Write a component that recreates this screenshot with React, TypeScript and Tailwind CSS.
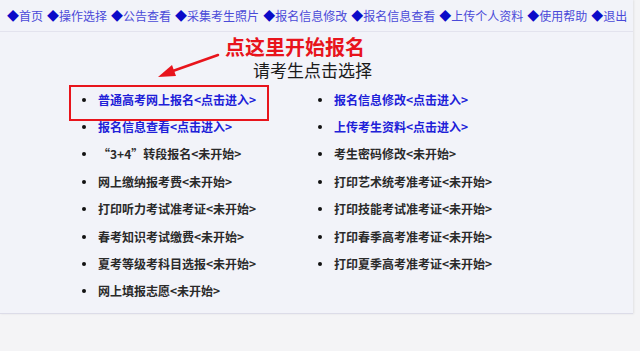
import React from "react";

const navItems = [
  "首页",
  "操作选择",
  "公告查看",
  "采集考生照片",
  "报名信息修改",
  "报名信息查看",
  "上传个人资料",
  "使用帮助",
  "退出",
];

type Item = { label: string; link?: boolean };

const leftItems: Item[] = [
  { label: "普通高考网上报名<点击进入>", link: true },
  { label: "报名信息查看<点击进入>", link: true },
  { label: "“3+4”转段报名<未开始>" },
  { label: "网上缴纳报考费<未开始>" },
  { label: "打印听力考试准考证<未开始>" },
  { label: "春考知识考试缴费<未开始>" },
  { label: "夏考等级考科目选报<未开始>" },
  { label: "网上填报志愿<未开始>" },
];

const rightItems: Item[] = [
  { label: "报名信息修改<点击进入>", link: true },
  { label: "上传考生资料<点击进入>", link: true },
  { label: "考生密码修改<未开始>" },
  { label: "打印艺术统考准考证<未开始>" },
  { label: "打印技能考试准考证<未开始>" },
  { label: "打印春季高考准考证<未开始>" },
  { label: "打印夏季高考准考证<未开始>" },
];

function Row({ item }: { item?: Item }) {
  if (!item) return <div className="h-[27.4px]" />;
  return (
    <div className="flex items-center h-[27.4px]">
      <span className="ml-[2px] w-[4px] h-[4px] rounded-full bg-[#111]" />
      <span
        className={`ml-[12px] text-[12px] font-semibold leading-none ${
          item.link ? "text-[#2020d8]" : "text-[#2a2a2a]"
        }`}
      >
        {item.label}
      </span>
    </div>
  );
}

export default function App() {
  return (
    <div
      className="w-[640px] h-[351px] bg-[#f4f4f6] overflow-hidden"
      style={{ fontFamily: '"Noto Sans CJK SC", "Noto Sans", sans-serif' }}
    >
      <div className="w-[633px] bg-[#f2f3f9] border-b border-[#dcdce8] shadow-[1px_0_2px_rgba(0,0,0,0.08)]">
        {/* 顶部导航 */}
        <div className="h-[32px] flex items-center pl-[7px] gap-[4px] border-b border-[#e3e3ee]">
          {navItems.map((n) => (
            <span key={n} className="text-[12px] leading-none text-[#4a4ad8] whitespace-nowrap">
              <span className="text-[#0a0ac8]">◆</span>
              {n}
            </span>
          ))}
        </div>

        <div className="relative">
          <p className="mt-[4px] ml-[225px] text-[20px] leading-[22px] font-bold text-[#e8141c]">
            点这里开始报名
          </p>
          <p className="mt-[3px] ml-[253px] text-[17px] leading-[18px] text-[#1a1a1a]">
            请考生点击选择
          </p>

          {/* 箭头 */}
          <svg
            className="absolute left-[150px] top-[14px]"
            width="75"
            height="32"
            viewBox="0 0 75 32"
          >
            <line x1="68" y1="5" x2="20" y2="22" stroke="#e8141c" strokeWidth="2.5" strokeLinecap="round" />
            <polygon points="8,27 22,15 26,26" fill="#e8141c" />
          </svg>

          {/* 红框 */}
          <div className="absolute left-[69px] top-[49px] w-[200px] h-[36px] border-2 border-[#e8141c]" />

          <div className="grid grid-cols-[236px_1fr] pl-[80px] pt-[7px] pb-[8px]">
            <div className="flex flex-col">
              {leftItems.map((it) => (
                <Row key={it.label} item={it} />
              ))}
            </div>
            <div className="flex flex-col">
              {rightItems.map((it) => (
                <Row key={it.label} item={it} />
              ))}
            </div>
          </div>
        </div>
      </div>
    </div>
  );
}
